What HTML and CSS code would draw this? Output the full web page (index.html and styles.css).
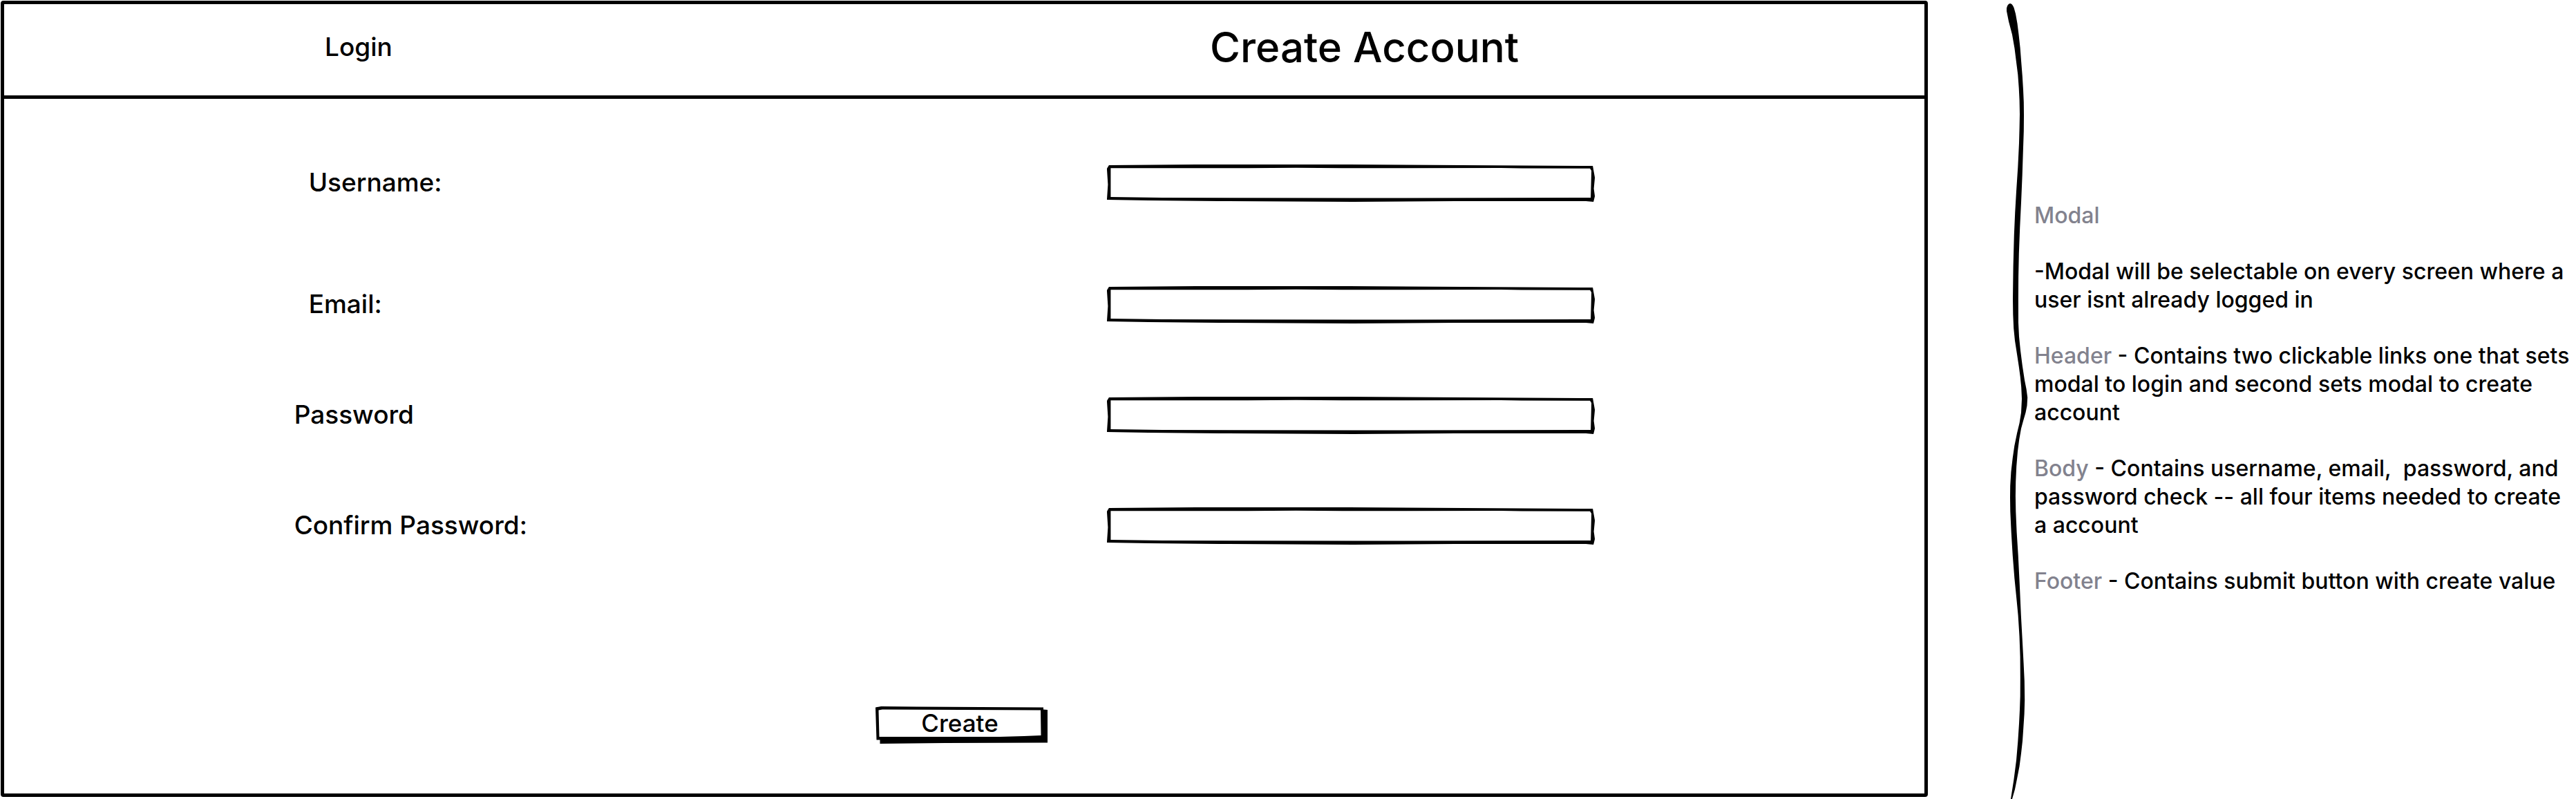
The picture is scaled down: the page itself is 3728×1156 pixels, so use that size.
FILE: index.html
```html
<!DOCTYPE html>
<html lang="en">
<head>
  <meta charset="utf-8">
  <meta name="viewport" content="width=device-width, initial-scale=1">
  <title>Create Account</title>
  <link rel="stylesheet" href="styles.css">
</head>
<body>
  <div class="page">
    <main class="modal">
      <header class="modal-header">
        <a class="login-link" href="#login">Login</a>
        <h1 class="title"><a href="#create">Create Account</a></h1>
      </header>
      <form class="form">
        <div class="field field-first">
          <label class="label label-indent" for="username">Username:</label>
          <input class="input" id="username" type="text">
        </div>
        <div class="field">
          <label class="label label-indent" for="email">Email:</label>
          <input class="input" id="email" type="email">
        </div>
        <div class="field">
          <label class="label" for="password">Password</label>
          <input class="input" id="password" type="password">
        </div>
        <div class="field">
          <label class="label" for="confirm">Confirm Password:</label>
          <input class="input" id="confirm" type="password">
        </div>
        <footer class="modal-footer">
          <button class="submit" type="submit">Create</button>
        </footer>
      </form>
    </main>

    <aside class="notes">
      <svg class="brace" viewBox="0 0 40 1156" preserveAspectRatio="none" aria-hidden="true">
        <path d="M9 5 Q5 6 4 12 L4 16 L7 31 L12 50 L15.5 70 L18 90 L20.3 108 L21.7 127 L22.6 145 L23 165 L22.6 185 L22 207 L20.3 242 L18 277 L16.2 308 L14.8 340 L13.6 385 L13 433 L13.3 455 L14.2 475 L16 493 L18.8 511 L21.7 530 L23.7 545 L25.2 560 L26 577 L25 597 L22.6 612 L19 627 L15.3 645 L12.7 663 L10.4 683 L9.2 703 L9 720 L9.3 740 L10.7 770 L12.7 803 L15.4 837 L18.2 865 L20.6 890 L22.5 920 L23.6 950 L23.8 980 L23.7 1007 L23 1027 L22 1047 L20.3 1073 L18 1100 L14.4 1128 L10 1156 L12 1156 L16 1142 L19 1127 L22.5 1109 L25 1090 L27 1072 L28.3 1053 L29.6 1033 L30.2 1013 L29.8 985 L28.6 960 L27 930 L24.8 890 L22.8 845 L20.7 803 L18.6 770 L17.3 740 L16.9 718 L17.2 697 L18.2 675 L20 653 L22.2 636 L25 620 L28.3 608 L31.5 597 L33.5 587 L34.2 575 L32.6 563 L30 550 L26.8 529 L24 507 L22 487 L21 467 L20.9 433 L21.1 400 L21.8 367 L23.2 330 L25 293 L26.7 253 L28 213 L28.8 190 L29 167 L28.8 148 L28 130 L26.8 110 L25.2 90 L23.6 69 L21.5 50 L19.5 34 L17 20 L14.5 11 Q12 5 9 5 Z"/>
      </svg>
      <div class="notes-text">
        <p><span class="term">Modal</span></p>
        <p>-Modal will be selectable on every screen where a user isnt already logged in</p>
        <p><span class="term">Header</span> - Contains two clickable links one that sets modal to login and second sets modal to create account</p>
        <p><span class="term">Body</span> - Contains username, email,&nbsp; password, and password check -- all four items needed to create a&nbsp;account</p>
        <p><span class="term">Footer</span> - Contains submit button with create value</p>
      </div>
    </aside>
  </div>
</body>
</html>
```
FILE: styles.css
```css
* {
  box-sizing: border-box;
}

body {
  margin: 0;
  background: #fff;
  color: #000;
  font-family: Inter, "Open Sans", sans-serif;
  font-weight: 500;
}

a {
  color: inherit;
  text-decoration: none;
}

.page {
  display: grid;
  grid-template-columns: 155fr 46fr;
  column-gap: 110px;
  min-height: 100vh;
}

/* Modal */

.modal {
  display: flex;
  flex-direction: column;
  margin: 1px 0 3px 1px;
  border: 5px solid #000;
  border-radius: 4px;
}

.modal-header {
  display: grid;
  grid-template-columns: 1281fr 1034fr;
  align-items: center;
  height: 137px;
  padding: 0 0 8px 16.7%;
  border-bottom: 5px solid #000;
}

.login-link {
  font-size: 37px;
  line-height: 48px;
}

.title {
  margin: 0;
  font-size: 60px;
  line-height: 72px;
  font-weight: 500;
}

.form {
  display: flex;
  flex: 1;
  flex-direction: column;
  gap: 106px;
  padding-top: 95px;
}

.field {
  display: grid;
  grid-template-columns: 1177fr 706fr 477fr;
  align-items: center;
  padding-left: 15.1%;
}

.field-first {
  margin-bottom: 16px;
}

.label {
  padding-bottom: 2px;
  font-size: 37px;
  line-height: 48px;
}

.label-indent {
  padding-left: 21px;
}

/* Hand-drawn outline, stretched to the box */
.input {
  width: 100%;
  height: 54px;
  padding: 4px 16px;
  border: 0;
  font: inherit;
  font-size: 32px;
  background: url("data:image/svg+xml,%3Csvg xmlns='http://www.w3.org/2000/svg' viewBox='0 0 706 54' preserveAspectRatio='none'%3E%3Cpath fill-rule='evenodd' d='M3 1 L129 0 L350 0 L703 2 L706 19 L704.5 35 L706 46 L704 54 L693 53 L504 53 L356 54 L162 53 L60 52 L0 51 L1.5 29 L0 6Z M5.5 5.3 L203 5.3 L274 4.7 L341 5.3 L570 5 L600 5.6 L699 5.7 L701 9 L700 48 L356 48.5 L80 48 L5.5 47Z'/%3E%3C/svg%3E") center / 100% 100% no-repeat;
}

.modal-footer {
  display: flex;
  justify-content: center;
  margin-top: 128px;
  padding: 0 8px 72px 0;
}

.submit {
  width: 249px;
  height: 54px;
  padding: 0 5px 6px 0;
  border: 0;
  color: inherit;
  font: inherit;
  font-size: 35px;
  line-height: 48px;
  cursor: pointer;
  background: url("data:image/svg+xml,%3Csvg xmlns='http://www.w3.org/2000/svg' viewBox='0 0 249 54' preserveAspectRatio='none'%3E%3Cpath fill-rule='evenodd' d='M0 1.5 L8 0 L60 .5 L243 1.5 L243 4.5 L249 5 L249 52.5 L100 53 L6.5 54 L6.5 48.5 L1.5 48.5Z M4.5 5.5 L10 4.5 L239 5.5 L239.5 42 L215 43 L180 44 L30 44 L5.5 44Z'/%3E%3C/svg%3E") center / 100% 100% no-repeat;
}

/* Notes */

.notes {
  display: flex;
  align-items: center;
  gap: 4px;
}

.brace {
  flex: none;
  align-self: stretch;
  width: 40px;
}

.notes-text {
  display: flex;
  flex: 1;
  flex-direction: column;
  gap: 40px;
  min-width: 0;
  padding-bottom: 4px;
  font-size: 32px;
  line-height: 41px;
}

.notes-text p {
  margin: 0;
}

.term {
  color: #82828e;
}
```
